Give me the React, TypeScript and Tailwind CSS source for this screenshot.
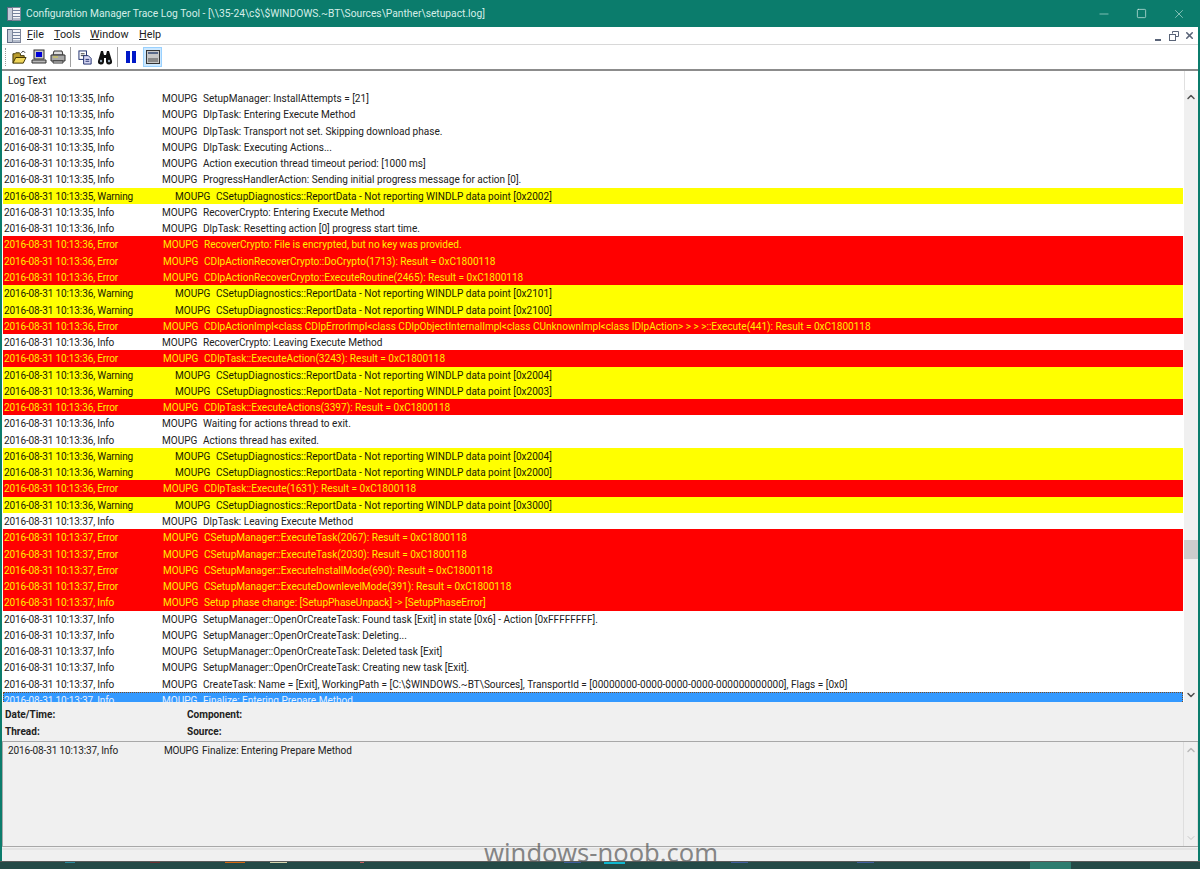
import { ChevronDown, ChevronUp, Minus, Square, X } from 'lucide-react'

type Level = 'info' | 'warning' | 'error'

const info = (time: string, msg: string) => ({ time, level: 'info' as Level, msg })
const warn = (time: string, msg: string) => ({ time, level: 'warning' as Level, msg })
const err = (time: string, msg: string) => ({ time, level: 'error' as Level, msg })

const rows = [
  info('10:13:35', 'SetupManager: InstallAttempts = [21]'),
  info('10:13:35', 'DlpTask: Entering Execute Method'),
  info('10:13:35', 'DlpTask: Transport not set. Skipping download phase.'),
  info('10:13:35', 'DlpTask: Executing Actions...'),
  info('10:13:35', 'Action execution thread timeout period: [1000 ms]'),
  info('10:13:35', 'ProgressHandlerAction: Sending initial progress message for action [0].'),
  warn('10:13:35', 'CSetupDiagnostics::ReportData - Not reporting WINDLP data point [0x2002]'),
  info('10:13:35', 'RecoverCrypto: Entering Execute Method'),
  info('10:13:36', 'DlpTask: Resetting action [0] progress start time.'),
  err('10:13:36', 'RecoverCrypto: File is encrypted, but no key was provided.'),
  err('10:13:36', 'CDlpActionRecoverCrypto::DoCrypto(1713): Result = 0xC1800118'),
  err('10:13:36', 'CDlpActionRecoverCrypto::ExecuteRoutine(2465): Result = 0xC1800118'),
  warn('10:13:36', 'CSetupDiagnostics::ReportData - Not reporting WINDLP data point [0x2101]'),
  warn('10:13:36', 'CSetupDiagnostics::ReportData - Not reporting WINDLP data point [0x2100]'),
  err('10:13:36', 'CDlpActionImpl<class CDlpErrorImpl<class CDlpObjectInternalImpl<class CUnknownImpl<class IDlpAction> > > >::Execute(441): Result = 0xC1800118'),
  info('10:13:36', 'RecoverCrypto: Leaving Execute Method'),
  err('10:13:36', 'CDlpTask::ExecuteAction(3243): Result = 0xC1800118'),
  warn('10:13:36', 'CSetupDiagnostics::ReportData - Not reporting WINDLP data point [0x2004]'),
  warn('10:13:36', 'CSetupDiagnostics::ReportData - Not reporting WINDLP data point [0x2003]'),
  err('10:13:36', 'CDlpTask::ExecuteActions(3397): Result = 0xC1800118'),
  info('10:13:36', 'Waiting for actions thread to exit.'),
  info('10:13:36', 'Actions thread has exited.'),
  warn('10:13:36', 'CSetupDiagnostics::ReportData - Not reporting WINDLP data point [0x2004]'),
  warn('10:13:36', 'CSetupDiagnostics::ReportData - Not reporting WINDLP data point [0x2000]'),
  err('10:13:36', 'CDlpTask::Execute(1631): Result = 0xC1800118'),
  warn('10:13:36', 'CSetupDiagnostics::ReportData - Not reporting WINDLP data point [0x3000]'),
  info('10:13:37', 'DlpTask: Leaving Execute Method'),
  err('10:13:37', 'CSetupManager::ExecuteTask(2067): Result = 0xC1800118'),
  err('10:13:37', 'CSetupManager::ExecuteTask(2030): Result = 0xC1800118'),
  err('10:13:37', 'CSetupManager::ExecuteInstallMode(690): Result = 0xC1800118'),
  err('10:13:37', 'CSetupManager::ExecuteDownlevelMode(391): Result = 0xC1800118'),
  { time: '10:13:37', level: 'error' as Level, label: 'Info', msg: 'Setup phase change: [SetupPhaseUnpack] -> [SetupPhaseError]' },
  info('10:13:37', 'SetupManager::OpenOrCreateTask: Found task [Exit] in state [0x6] - Action [0xFFFFFFFF].'),
  info('10:13:37', 'SetupManager::OpenOrCreateTask: Deleting...'),
  info('10:13:37', 'SetupManager::OpenOrCreateTask: Deleted task [Exit]'),
  info('10:13:37', 'SetupManager::OpenOrCreateTask: Creating new task [Exit].'),
  info('10:13:37', 'CreateTask: Name = [Exit], WorkingPath = [C:\\$WINDOWS.~BT\\Sources], TransportId = [00000000-0000-0000-0000-000000000000], Flags = [0x0]'),
]

const labels: Record<Level, string> = { info: 'Info', warning: 'Warning', error: 'Error' }

function LogRow({ time, level, label, msg }: { time: string; level: Level; label?: string; msg: string }) {
  return (
    <div
      className={
        'flex h-[16.27px] items-center whitespace-nowrap pt-[1px] ' +
        (level === 'warning'
          ? 'bg-[#ffff00] text-[#1a1a00]'
          : level === 'error'
            ? 'bg-[#ff0000] text-[#ffee00]'
            : 'text-[#222222]')
      }
    >
      <span
        className={
          'pl-[1px] tracking-[-0.15px] ' +
          (level === 'warning' ? 'w-[172px]' : level === 'error' ? 'w-[160px]' : 'w-[159px]')
        }
      >
        2016-08-31 {time}, {label ?? labels[level]}
      </span>
      <span className="w-[41px]">MOUPG</span>
      <span>{msg}</span>
    </div>
  )
}

function ServerIcon() {
  return (
    <svg viewBox="0 0 14 14" className="h-[14px] w-[14px] shrink-0">
      <rect x=".5" y=".5" width="5" height="13" fill="#c4cbd8" stroke="#5f6b85" />
      <rect x="5.5" y=".5" width="8" height="13" fill="#f4f5f8" stroke="#7d8599" />
      <path d="M6 3.5h7M6 6.5h7M6 9.5h7M6 12h7" stroke="#76849f" />
    </svg>
  )
}

function ToolButton({ children, active }: { children: React.ReactNode; active?: boolean }) {
  return (
    <div
      className={
        'flex h-[20px] w-[19px] shrink-0 items-center justify-center ' +
        (active ? 'border border-[#99d1ff] bg-[#cce8ff]' : '')
      }
    >
      {children}
    </div>
  )
}

function Toolbar() {
  return (
    <div className="flex h-[24px] items-center bg-white pl-[3px]">
      <div className="mr-[4px] h-[18px] border-l border-dotted border-[#9a9a9a]" />
      <ToolButton>
        <svg viewBox="0 0 16 16" className="h-[15px] w-[15px]">
          <path d="M1 14V4h2l1-1h4l1 1v2h4v2" fill="#b89b2e" stroke="#3b3000" />
          <path d="M1 14l3-6h11l-3 6z" fill="#f0d65a" stroke="#3b3000" />
          <path d="M10 3l2-2 2 2" fill="none" stroke="#222" />
        </svg>
      </ToolButton>
      <ToolButton>
        <svg viewBox="0 0 16 16" className="h-[16px] w-[16px]">
          <rect x="3" y="1" width="10" height="9" fill="#c8c8c8" stroke="#333" />
          <rect x="5" y="3" width="6" height="5" fill="#0000d8" />
          <path d="M1 11h14v3H1z" fill="#b8b8b8" stroke="#333" />
        </svg>
      </ToolButton>
      <ToolButton>
        <svg viewBox="0 0 16 16" className="h-[16px] w-[16px]">
          <path d="M4 2h8l1 4H3z" fill="#ddd" stroke="#333" />
          <path d="M1 6h14v6H1z" fill="#a8a8a8" stroke="#333" />
          <path d="M3 12h10v2H3z" fill="#eee" stroke="#333" />
          <path d="M3 8h5" stroke="#ddd040" />
        </svg>
      </ToolButton>
      <div className="ml-[3px] mr-[5px] h-[20px] w-px shrink-0 bg-[#a0a0a0]" />
      <ToolButton>
        <svg viewBox="0 0 16 16" className="h-[15px] w-[15px]">
          <rect x="1" y="1" width="8" height="9" fill="#fff" stroke="#1a2a6a" />
          <path d="M3 4h4M3 6h4" stroke="#333" />
          <path d="M6 6h5l3 3v6H6z" fill="#d8d8f4" stroke="#1a2a6a" />
          <path d="M8 10h4M8 12h4" stroke="#1a2a6a" />
        </svg>
      </ToolButton>
      <ToolButton>
        <svg viewBox="0 0 16 16" className="h-[16px] w-[16px]">
          <path d="M4 2h2l1 4h2l1-4h2l3 10a3 3 0 0 1-6 1V9H7v4a3 3 0 0 1-6-1z" fill="#111" />
          <circle cx="4" cy="12" r="1.2" fill="#9ab" />
          <circle cx="12" cy="12" r="1.2" fill="#9ab" />
        </svg>
      </ToolButton>
      <div className="mx-[3px] h-[20px] w-px shrink-0 bg-[#a0a0a0]" />
      <ToolButton>
        <svg viewBox="0 0 16 16" className="h-[16px] w-[16px]">
          <rect x="3" y="2" width="4" height="12" fill="#0018c8" />
          <rect x="9" y="2" width="4" height="12" fill="#0018c8" />
        </svg>
      </ToolButton>
      <div className="w-[3px] shrink-0" />
      <ToolButton active>
        <svg viewBox="0 0 16 16" className="h-[16px] w-[16px]">
          <rect x="1.5" y="1.5" width="13" height="13" fill="#c8c8c8" stroke="#333" />
          <rect x="3" y="3" width="10" height="2" fill="#5a6a8a" />
          <rect x="3" y="9" width="10" height="4" fill="#8a8a8a" />
        </svg>
      </ToolButton>
    </div>
  )
}

function Scrollbar() {
  return (
    <div className="flex w-[14px] shrink-0 flex-col items-center justify-between bg-[#f0f0f0] py-[1px]">
      <ChevronUp className="h-[12px] w-[12px] text-[#505050]" strokeWidth={3} />
      <ChevronDown className="h-[12px] w-[12px] text-[#505050]" strokeWidth={3} />
    </div>
  )
}

export default function App() {
  return (
    <div
      className="relative flex h-[869px] w-[1200px] flex-col overflow-hidden bg-[#f0f0f0] text-[10.05px] text-[#222222]"
      style={{ fontFamily: 'Roboto, sans-serif' }}
    >
      {/* title bar */}
      <div className="flex h-[27px] shrink-0 items-center bg-[#0b7c6c] pl-[7px] text-[10.25px] text-[#d4eee8]">
        <ServerIcon />
        <span className="ml-[5px]">Configuration Manager Trace Log Tool - [\\35-24\c$\$WINDOWS.~BT\Sources\Panther\setupact.log]</span>
        <div className="ml-auto flex items-center text-[#d4eee8]">
          <Minus className="mr-[25px] h-[14px] w-[14px]" strokeWidth={1} />
          <Square className="mr-[25px] h-[11px] w-[11px]" strokeWidth={1.5} />
          <X className="mr-[14px] h-[14px] w-[14px]" strokeWidth={1} />
        </div>
      </div>

      <div className="flex min-h-0 flex-1 flex-col border-x-2 border-x-[#0b7c6c]">
        {/* menu bar */}
        <div className="flex h-[17px] shrink-0 items-center bg-white pl-[5px] text-[10.8px]">
          <ServerIcon />
          <span className="ml-[6px] w-[27px]"><span className="underline">F</span>ile</span>
          <span className="w-[36px]"><span className="underline">T</span>ools</span>
          <span className="w-[49px]"><span className="underline">W</span>indow</span>
          <span><span className="underline">H</span>elp</span>
          <div className="ml-auto flex gap-[1px] pr-[1px] text-[#5a6478]">
            <div className="flex h-[15px] w-[15px] items-end justify-center pb-[2px]">
              <div className="h-[2px] w-[6px] bg-[#5a6478]" />
            </div>
            <div className="flex h-[15px] w-[15px] items-center justify-center">
              <svg viewBox="0 0 10 10" className="h-[10px] w-[10px]" fill="none" stroke="#5a6478">
                <path d="M3.5 2.5V.5h6v5H7" />
                <rect x=".5" y="3.5" width="6" height="6" />
              </svg>
            </div>
            <div className="flex h-[15px] w-[15px] items-center justify-center">
              <X className="h-[11px] w-[11px]" strokeWidth={3.5} />
            </div>
          </div>
        </div>
        <div className="h-[1px] shrink-0 bg-[#d8d8d8]" />

        <Toolbar />
        <div className="h-[2px] shrink-0 bg-[#8c8c8c]" />

        {/* header */}
        <div className="flex h-[19px] shrink-0 items-center bg-white">
          <span className="flex-1 pl-[6px]">Log Text</span>
          <div className="h-full w-[14px] border-l border-[#e0e0e0]" />
        </div>

        {/* log list */}
        <div className="flex h-[612px] shrink-0 bg-white">
          <div className="min-w-0 flex-1 overflow-hidden pl-[1px] pr-[1px]">
            {rows.map((r, i) => (
              <LogRow key={i} {...r} />
            ))}
            <div className="flex h-[16.27px] items-center whitespace-nowrap border border-dotted border-[#7a4a20] bg-[#3399ff] pt-[1px] text-[#e8f2ff]">
              <span className="w-[158px] tracking-[-0.15px]">2016-08-31 10:13:37, Info</span>
              <span className="w-[41px]">MOUPG</span>
              <span>Finalize: Entering Prepare Method</span>
            </div>
          </div>
          <div className="relative flex">
            <Scrollbar />
            <div className="absolute left-0 top-[450px] h-[19px] w-[14px] bg-[#cdcdcd]" />
          </div>
        </div>

        {/* details */}
        <div className="grid h-[39px] shrink-0 grid-cols-[182px_1fr] content-start gap-y-[2px] pl-[3px] pt-[5px] font-bold leading-[15px]">
          <span>Date/Time:</span>
          <span>Component:</span>
          <span>Thread:</span>
          <span>Source:</span>
        </div>

        {/* message box */}
        <div className="flex h-[106px] shrink-0 border-y border-l border-y-[#a8a8a8] border-l-[#a8a8a8]">
          <div className="flex flex-1 whitespace-nowrap pl-[5px] pt-[1px] leading-[15px]">
            <span className="w-[156px] tracking-[-0.15px]">2016-08-31 10:13:37, Info</span>
            <span className="w-[38px] tracking-[-0.2px]">MOUPG</span>
            <span>Finalize: Entering Prepare Method</span>
          </div>
          <div className="flex w-[15px] flex-col items-center justify-between border-x border-[#dedede] py-[2px] text-[#b8b8b8]">
            <ChevronUp className="h-[12px] w-[12px]" strokeWidth={3} />
            <ChevronDown className="h-[12px] w-[12px]" strokeWidth={1.5} />
          </div>
        </div>

        {/* status bar */}
        <div className="mt-[1px] h-[2px] shrink-0 bg-[#e4e4e4]" />
        <div className="flex-1" />
      </div>

      {/* taskbar */}
      <div className="flex h-[8px] shrink-0 items-start border-t border-[#5a5a5a] bg-[#244a47]">
        <div className="ml-[65px] h-[1px] w-[10px] bg-[#2a8ca0]" />
        <div className="ml-[75px] h-[1px] w-[10px] bg-[#6a3030]" />
        <div className="ml-[65px] h-[1px] w-[20px] bg-[#d86a10]" />
        <div className="ml-[25px] h-[1px] w-[17px] bg-[#d8d8b0]" />
        <div className="ml-[73px] h-[1px] w-[4px] bg-[#c86060]" />
        <div className="ml-[200px] h-[1px] w-[17px] bg-[#4060a0]" />
        <div className="ml-[23px] h-[2px] w-[21px] bg-[#10b8d0]" />
        <div className="ml-[106px] h-[1px] w-[17px] bg-[#4060a0]" />
        <div className="ml-[109px] h-[1px] w-[17px] bg-[#4060a0]" />
        <div className="ml-[156px] h-[7px] w-[41px] bg-[#2d7d70]" />
      </div>

      {/* watermark */}
      <div
        className="absolute left-[484px] top-[836px] text-[25.5px] leading-[32px] text-[#555555]/70"
        style={{ fontFamily: '"Noto Sans", sans-serif' }}
      >
        windows-noob.com
      </div>
    </div>
  )
}
